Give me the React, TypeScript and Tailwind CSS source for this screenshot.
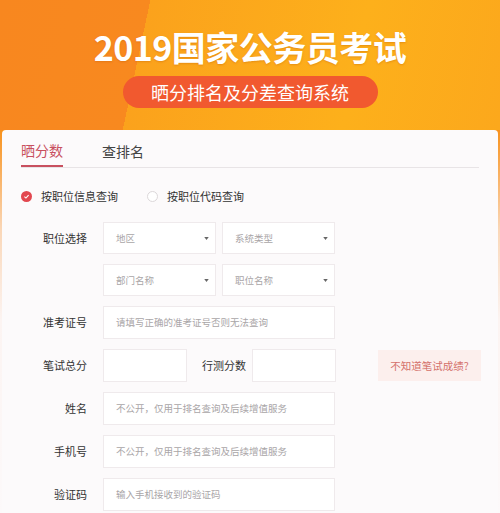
import React from 'react';

const font = { fontFamily: '"Noto Sans CJK SC", "Noto Sans", sans-serif' };

function Select({ text }: { text: string }) {
  return (
    <div className="flex h-full w-[113px] items-center justify-between border border-[#efeaec] bg-white pl-[12px] pr-[6px]">
      <span className="text-[9.5px] text-[#a9a5a7]">{text}</span>
      <svg viewBox="0 0 6 4" className="h-[3px] w-[5px]">
        <path d="M0 0h6L3 4z" fill="#666" />
      </svg>
    </div>
  );
}

function Input({ placeholder, className = 'w-[232px]' }: { placeholder?: string; className?: string }) {
  return (
    <div className={`flex h-full items-center border border-[#efeaec] bg-white pl-[12px] ${className}`}>
      {placeholder && <span className="text-[9.5px] text-[#a9a5a7]">{placeholder}</span>}
    </div>
  );
}

function Row({ label, children, h = 'h-[33px]' }: { label?: string; children: React.ReactNode; h?: string }) {
  return (
    <div className={`flex items-center ${h}`}>
      <div className="w-[86px] pr-[1px] text-right text-[11px] text-[#333]">{label}</div>
      <div className="ml-[15px] flex h-full items-center gap-[6px]">{children}</div>
    </div>
  );
}

export default function App() {
  return (
    <div
      className="h-[513px] w-[500px] overflow-hidden bg-[linear-gradient(180deg,#f8921d_0,#f8921d_130px,#fad7b8_230px,#fcf4f2_320px,#fcf9fa_100%)]"
      style={font}
    >
      {/* Banner */}
      <div className="flex h-[130px] flex-col items-center bg-[linear-gradient(102deg,#f8871f_0,#f8891f_28.5%,#fba21c_28.5%,#fdb01b_70%,#fca81c_100%)] pt-[26px]">
        <h1 className="text-[34px] font-bold leading-[42px] tracking-[-0.5px] text-white [text-shadow:0_1px_2px_rgba(190,90,0,0.35)]">
          2019国家公务员考试
        </h1>
        <div className="mt-[8px] flex h-[32px] w-[255px] items-center justify-center rounded-full bg-[#f1592f] text-[18px] text-white">
          晒分排名及分差查询系统
        </div>
      </div>

      {/* Card */}
      <div className="mx-[2px] h-[383px] rounded-t-[4px] bg-[#fcfafb]">
        <div className="px-[19px] pt-[6px]">
          <div className="flex h-[32px] border-b border-[#e8e4e6]">
            <div className="flex h-full items-center border-b-2 border-[#c8505f] text-[14px] text-[#c8505f]">晒分数</div>
            <div className="ml-[39px] flex h-full items-center text-[14px] text-[#444]">查排名</div>
          </div>

          <div className="mt-[18px] flex h-[20px] items-center text-[11px] text-[#333]">
            <span className="flex h-[11px] w-[11px] items-center justify-center rounded-full bg-[#e2474f]">
              <svg viewBox="0 0 10 10" className="h-[7px] w-[7px]">
                <path d="M2 5.2 4.2 7.2 8 3" fill="none" stroke="white" strokeWidth="1.6" />
              </svg>
            </span>
            <span className="ml-[9px]">按职位信息查询</span>
            <span className="ml-[29px] h-[11px] w-[11px] rounded-full border border-[#dcd8da] bg-white" />
            <span className="ml-[9px]">按职位代码查询</span>
          </div>
        </div>

        <div className="mt-[16px] flex flex-col gap-[10px]">
          <Row label="职位选择" h="h-[32px]">
            <Select text="地区" />
            <Select text="系统类型" />
          </Row>
          <Row h="h-[32px]">
            <Select text="部门名称" />
            <Select text="职位名称" />
          </Row>
          <Row label="准考证号">
            <Input placeholder="请填写正确的准考证号否则无法查询" />
          </Row>
          <div className="flex h-[33px] items-center">
            <Row label="笔试总分">
              <Input className="w-[84px]" />
              <span className="ml-[9px] text-[11px] text-[#333]">行测分数</span>
              <Input className="w-[84px]" />
            </Row>
            <div className="ml-[42px] flex h-[31px] w-[103px] items-center justify-center bg-[#fcefed] text-[10.5px] text-[#d4716b]">
              不知道笔试成绩?
            </div>
          </div>
          <Row label="姓名">
            <Input placeholder="不公开，仅用于排名查询及后续增值服务" />
          </Row>
          <Row label="手机号">
            <Input placeholder="不公开，仅用于排名查询及后续增值服务" />
          </Row>
          <Row label="验证码">
            <Input placeholder="输入手机接收到的验证码" />
          </Row>
        </div>
      </div>
    </div>
  );
}
